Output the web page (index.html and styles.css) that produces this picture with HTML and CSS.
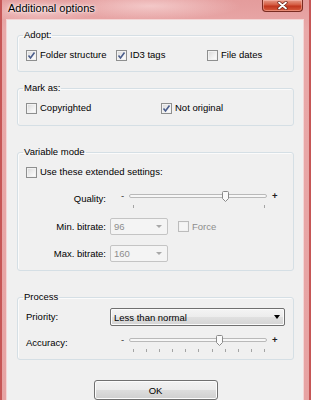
FILE: index.html
```html
<!DOCTYPE html>
<html lang="en">
  <head>
    <meta charset="UTF-8" />
    <title>Additional options</title>
    <link rel="stylesheet" href="styles.css">
  </head>
  <body>
    <div class="window">
      <div class="titlebar">
        <span class="title">Additional options</span>
        <span class="close-btn">
          <svg width="11" height="9" viewBox="0 0 11 9">
            <path d="M2 1.5 L9 7.5 M9 1.5 L2 7.5" stroke="#6b2418" stroke-width="3.2" stroke-linecap="round" />
            <path d="M2 1.5 L9 7.5 M9 1.5 L2 7.5" stroke="#ffffff" stroke-width="1.8" stroke-linecap="round" />
          </svg>
        </span>
      </div>

      <div class="client">
        <fieldset class="group adopt">
          <legend>Adopt:</legend>
          <div class="row">
            <label class="check w-folder"><span class="box checked"><svg width="9" height="9" viewBox="0 0 9 9"><path d="M1.5 4.5 L3.5 7 L7.5 1.5" fill="none" stroke="#4a5d8c" stroke-width="1.6" /></svg></span>Folder structure</label>
            <label class="check w-id3"><span class="box checked"><svg width="9" height="9" viewBox="0 0 9 9"><path d="M1.5 4.5 L3.5 7 L7.5 1.5" fill="none" stroke="#4a5d8c" stroke-width="1.6" /></svg></span>ID3 tags</label>
            <label class="check"><span class="box"></span>File dates</label>
          </div>
        </fieldset>

        <fieldset class="group mark">
          <legend>Mark as:</legend>
          <div class="row">
            <label class="check w-copy"><span class="box"></span>Copyrighted</label>
            <label class="check"><span class="box checked"><svg width="9" height="9" viewBox="0 0 9 9"><path d="M1.5 4.5 L3.5 7 L7.5 1.5" fill="none" stroke="#4a5d8c" stroke-width="1.6" /></svg></span>Not original</label>
          </div>
        </fieldset>

        <fieldset class="group variable">
          <legend>Variable mode</legend>
          <div class="row">
            <label class="check"><span class="box"></span>Use these extended settings:</label>
          </div>
          <div class="field slider-row quality">
            <span class="field-label">Quality:</span>
            <div class="slider">
              <span class="sign">-</span>
              <div class="rail">
                <div class="track"></div>
                <svg class="thumb" style="left: 93px" width="7" height="11" viewBox="0 0 7 11">
                  <path d="M0.5 1.5 Q0.5 0.5 1.5 0.5 H5.5 Q6.5 0.5 6.5 1.5 V7.5 L3.5 10.5 L0.5 7.5 Z" fill="#fafafa" stroke="#8a8a8a" />
                </svg>
                <div class="ticks"><i></i><i></i></div>
              </div>
              <span class="sign plus">+</span>
            </div>
          </div>
          <div class="field min">
            <span class="field-label">Min. bitrate:</span>
            <div class="combo disabled"><span>96</span><i class="arrow"></i></div>
            <label class="check disabled force"><span class="box"></span>Force</label>
          </div>
          <div class="field max">
            <span class="field-label">Max. bitrate:</span>
            <div class="combo disabled"><span>160</span><i class="arrow"></i></div>
          </div>
        </fieldset>

        <fieldset class="group process">
          <legend>Process</legend>
          <div class="field">
            <span class="field-label left">Priority:</span>
            <div class="combo priority"><span>Less than normal</span><i class="arrow"></i></div>
          </div>
          <div class="field slider-row accuracy">
            <span class="field-label left">Accuracy:</span>
            <div class="slider">
              <span class="sign">-</span>
              <div class="rail">
                <div class="track"></div>
                <svg class="thumb" style="left: 87px" width="7" height="11" viewBox="0 0 7 11">
                  <path d="M0.5 1.5 Q0.5 0.5 1.5 0.5 H5.5 Q6.5 0.5 6.5 1.5 V7.5 L3.5 10.5 L0.5 7.5 Z" fill="#fafafa" stroke="#8a8a8a" />
                </svg>
                <div class="ticks"><i></i><i></i><i></i><i></i><i></i><i></i><i></i><i></i><i></i><i></i><i></i></div>
              </div>
              <span class="sign plus">+</span>
            </div>
          </div>
        </fieldset>

        <div class="actions">
          <button class="btn">OK</button>
        </div>
      </div>
    </div>
  </body>
</html>
```

FILE: styles.css
```css
* {
  box-sizing: border-box;
  margin: 0;
  padding: 0;
}

body {
  width: 311px;
  height: 400px;
  overflow: hidden;
  font-family: "Liberation Sans", Arial, sans-serif;
  font-size: 9.5px;
  color: #000;
  background: #e8a4a4;
}

.window {
  width: 311px;
  height: 400px;
  display: flex;
  flex-direction: column;
  background:
    radial-gradient(ellipse 90px 14px at 150px 6px, rgba(255, 235, 235, 0.55), transparent),
    radial-gradient(ellipse 60px 12px at 40px 10px, rgba(255, 240, 240, 0.45), transparent),
    linear-gradient(#e49c9c, #e9a9a9 30px, #e7a3a3);
  box-shadow: inset 2px 0 0 #c65656, inset -2px 0 0 #c65656;
}

/* title bar */
.titlebar {
  height: 19px;
  display: flex;
  align-items: flex-start;
  justify-content: space-between;
  padding: 0 8px 0 8px;
}

.title {
  font-size: 11px;
  line-height: 14px;
  padding-top: 1px;
  text-shadow: 0 0 4px rgba(255, 255, 255, 0.9), 0 0 2px rgba(255, 255, 255, 0.9);
}

.close-btn {
  width: 41px;
  height: 12px;
  border: 1px solid #7a2c22;
  border-top: none;
  border-radius: 0 0 4px 4px;
  background: linear-gradient(#e69a88, #d45a40 45%, #c0361e 55%, #d85c3e);
  box-shadow: inset 0 0 0 1px rgba(255, 200, 190, 0.45);
  display: flex;
  justify-content: center;
  align-items: center;
}

/* client area */
.client {
  flex: 1;
  margin: 0 7px 0 6px;
  border: 1px solid #f3d6d6;
  border-bottom: none;
  background: #f0f0f0;
  padding: 9px 9px 0 10px;
  display: flex;
  flex-direction: column;
}

.group {
  border: 1px solid #d5dfe5;
  border-radius: 3px;
  padding: 7px 8px 9px 8px;
  min-width: 0;
  box-shadow: inset 1px 1px 0 #fbfbfb;
}

.group legend {
  margin-left: -3px;
  padding: 0 1px;
  line-height: 12px;
}

.group.mark {
  margin-top: 10px;
  padding-bottom: 10px;
}

.group.variable {
  margin-top: 20px;
  padding-bottom: 8px;
}

.group.process {
  margin-top: 20px;
  padding: 5px 8px 5px 8px;
}

.row {
  display: flex;
  align-items: center;
}

/* checkboxes */
.check {
  display: flex;
  align-items: center;
  height: 14px;
  line-height: 12px;
}

.check.w-folder {
  width: 90px;
}

.check.w-id3 {
  width: 91px;
}

.check.w-copy {
  width: 135px;
}

.box {
  width: 11px;
  height: 11px;
  margin-right: 3px;
  border: 1px solid #8e8f8f;
  background: linear-gradient(135deg, #d8d8d8, #f6f6f6 70%, #ffffff);
  box-shadow: inset 0 0 0 1px #f2f2f2;
  display: flex;
  align-items: center;
  justify-content: center;
}

.check.disabled {
  color: #8d8d8d;
}

.check.disabled .box {
  border-color: #bcbcbc;
  background: #f6f6f6;
}

.check.force {
  margin-left: 10px;
}

/* label + control rows */
.field {
  display: flex;
  align-items: center;
}

.field.slider-row {
  align-items: flex-start;
}

.field.slider-row .field-label {
  margin-top: 3px;
}

.field.quality {
  margin-top: 11px;
}

.field.min {
  margin-top: 8px;
}

.field.max {
  margin-top: 10px;
}

.field.accuracy {
  margin-top: 8px;
}

.field-label {
  width: 80px;
  margin-right: 4px;
  text-align: right;
  line-height: 12px;
}

.field-label.left {
  width: 84px;
  margin-right: 0;
  text-align: left;
}

/* combo boxes */
.combo {
  width: 58px;
  height: 17px;
  padding: 0 5px 0 3px;
  border: 1px solid #c4c4c4;
  border-radius: 2px;
  background: #f4f4f4;
  color: #8d8d8d;
  display: flex;
  align-items: center;
  justify-content: space-between;
}

.combo .arrow {
  width: 0;
  height: 0;
  border-left: 3px solid transparent;
  border-right: 3px solid transparent;
  border-top: 3px solid #a8a8a8;
}

.combo.priority {
  width: 175px;
  height: 18px;
  padding: 0 4px 0 3px;
  border-color: #707070;
  background: linear-gradient(#f4f4f4, #ececec 50%, #e0e0e0 51%, #d4d4d4);
  box-shadow: inset 0 0 0 1px #fbfbfb;
  color: #000;
}

.combo.priority .arrow {
  border-left-width: 3.5px;
  border-right-width: 3.5px;
  border-top: 4px solid #000;
}

/* sliders */
.slider {
  width: 175px;
  height: 20px;
  padding-left: 11px;
  display: flex;
  align-items: flex-start;
}

.sign {
  width: 8px;
  line-height: 12px;
  color: #333;
}

.sign.plus {
  width: auto;
  margin-left: 5px;
  font-weight: bold;
  color: #202020;
}

.rail {
  position: relative;
  width: 138px;
  height: 20px;
}

.track {
  margin-top: 4px;
  height: 4px;
  border: 1px solid #b9b9b9;
  border-radius: 2px;
  background: #f7f7f7;
}

.thumb {
  position: absolute;
  top: 1px;
}

.ticks {
  margin-top: 7px;
  padding: 0 2px 0 4px;
  display: flex;
  justify-content: space-between;
}

.ticks i {
  width: 1px;
  height: 3px;
  background: #a4a4a4;
}

/* button */
.actions {
  margin-top: 20px;
  display: flex;
  justify-content: center;
}

.btn {
  width: 124px;
  height: 20px;
  border: 1px solid #707070;
  border-radius: 3px;
  background: linear-gradient(#f2f2f2, #ebebeb 49%, #dddddd 50%, #cfcfcf);
  box-shadow: inset 0 0 0 1px #fcfcfc;
  font: inherit;
  color: #000;
}
```
